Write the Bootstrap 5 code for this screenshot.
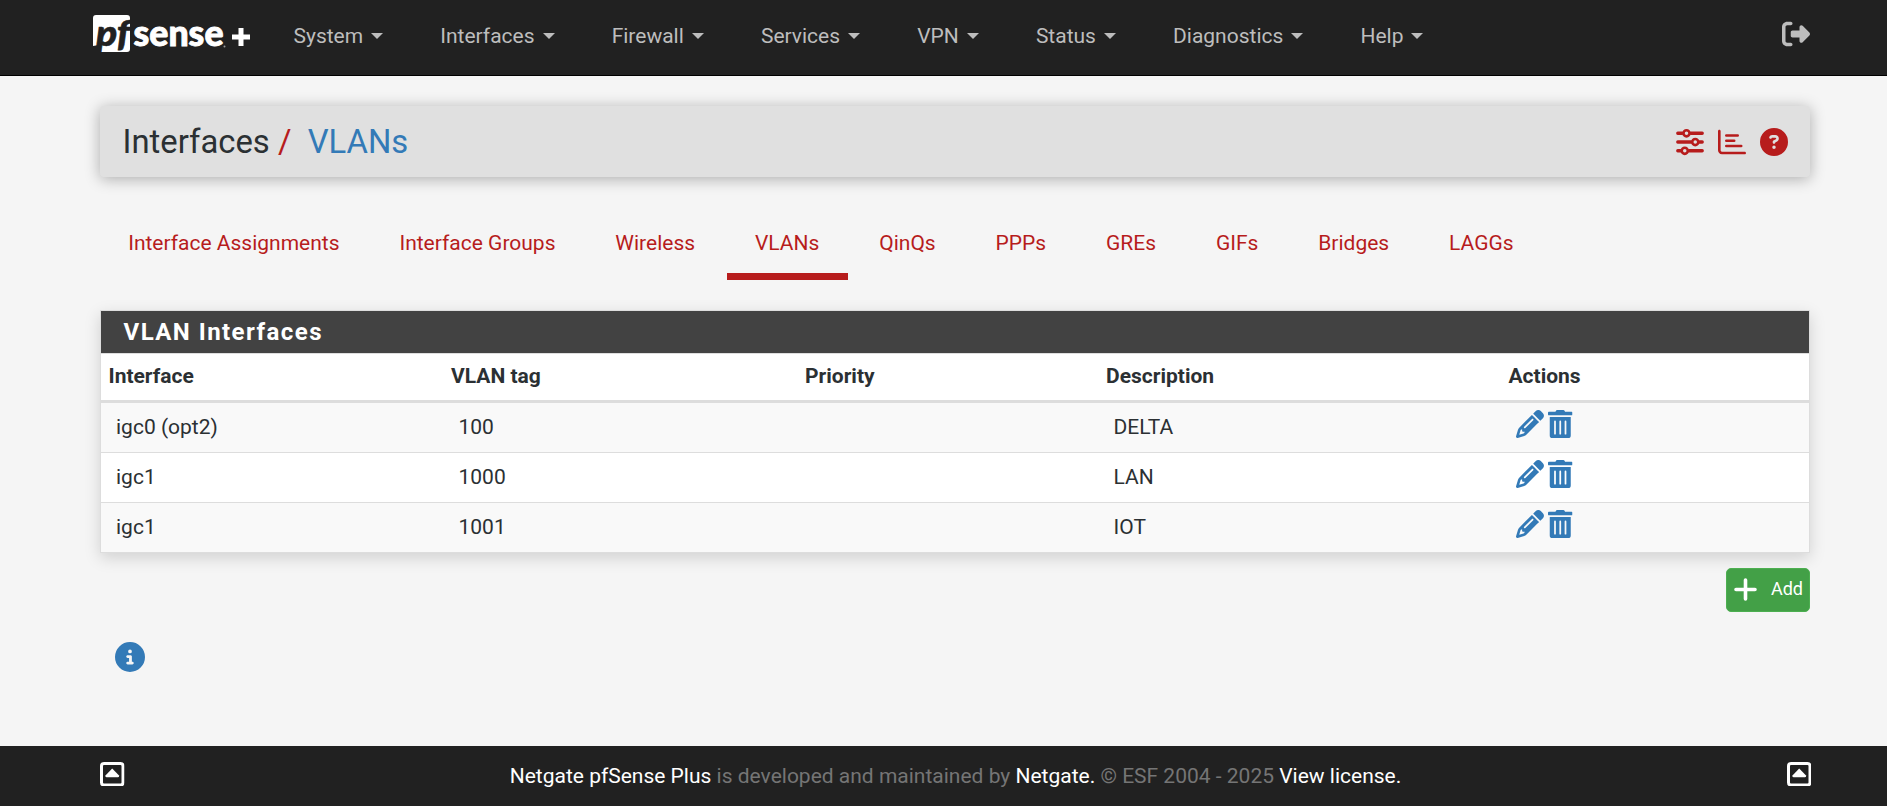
<!DOCTYPE html>
<html lang="en">
<head>
<meta charset="utf-8">
<title>Interfaces: VLANs</title>
<link href="https://cdn.jsdelivr.net/npm/bootstrap@5.3.0/dist/css/bootstrap.min.css" rel="stylesheet">
<style>
body{font-family:Roboto,sans-serif;font-size:21px;line-height:30px;background:#f5f5f5;color:#212121;min-height:806px}
a{text-decoration:none}
svg{display:block;fill:currentColor;flex:none}
.topnav{height:76px;background:#212121;border-bottom:1px solid #000;padding:0 77px 0 93px}
.topnav .nav-link{color:#bdbdbd;padding:0;line-height:30px}
.topnav .dropdown-toggle::after{border-top-width:6px;border-left-width:6px;border-right-width:6px;margin-left:8px;vertical-align:4px}
.logo{fill:#fff;margin-top:-5px}
.menu{gap:57.1px;margin-left:42.5px;padding-bottom:3px}
.page{width:1710px;margin:0 77px 0 100px}
.crumbs{height:71px;margin-top:30px;background:#e0e0e0;border-radius:4px;padding:0 22px 0 22.5px;box-shadow:0 2px 15px rgba(0,0,0,.3)}
.crumbs h1{font-size:32.8px;line-height:40px;font-weight:400;margin:0;color:#2b3033}
.red{color:#b71c1c}
.blue{color:#337ab7}
.tabs{margin-top:43px;gap:3.500px}
.tabs .nav-link{color:#b71c1c;padding:8px 28.200px 15px;border-bottom:7px solid transparent;line-height:30px}
.tabs .nav-link.active{border-color:#b71c1c}
.vpanel{margin-top:30px;border:1px solid #ddd;box-shadow:0 5px 15px rgba(0,0,0,.15)}
.vpanel h2{margin:0;height:42px;background:#424242;color:#fff;font-size:24px;font-weight:700;letter-spacing:1.45px;line-height:43px;padding-left:22.5px}
.vtable{table-layout:fixed;margin:0;border-top:1px solid #ddd;--bs-table-bg:#fff}
.vtable>:not(caption)>*>*{border:0;color:#2b3033;padding:0 15px;height:50px;line-height:49px;vertical-align:top}
.vtable thead th{padding:0 7.5px;height:48px;line-height:45px;border-bottom:3px solid #ddd!important}
.vtable tbody tr:nth-child(odd)>td{background:#f9f9f9;box-shadow:none}
.vtable tbody tr:not(:last-child)>td{border-bottom:1px solid #ddd}
.vtable tbody tr:last-child>td{height:49px}
.acts{gap:4px;padding-top:7px}
.addbtn{width:84px;height:44px;background:#43a047;border:1px solid #4caf50;border-radius:5px;color:#fff;font-size:18px;line-height:26px;padding:0 6px 2px 7px;margin-top:15px}
.foot{height:60px;background:#212121;color:#757575;padding:0 76px 0 100px}
.foot a{color:#fff}
</style>
</head>
<body class="d-flex flex-column">
<svg width="0" height="0" class="d-none">
<symbol id="pencil" viewBox="0 0 512 512"><path d="M410.3 231l11.3-11.3-33.9-33.9-62.1-62.1L291.7 89.8l-11.3 11.3-22.6 22.6L58.6 322.9c-10.4 10.4-18 23.3-22.2 37.4L1 480.7c-2.5 8.4-.2 17.5 6.1 23.7s15.3 8.5 23.7 6.1l120.3-35.4c14.1-4.2 27-11.8 37.4-22.2L387.7 253.7 410.3 231zM160 399.4l-9.1 22.7c-4 3.1-8.5 5.4-13.3 6.9L59.4 452l23-78.1c1.4-4.9 3.8-9.4 6.9-13.3l22.7-9.1v32c0 8.800 7.200 16 16 16h32zM362.700 18.700L348.300 33.200 325.700 55.800 314.300 67.100l33.900 33.900 62.100 62.100 33.900 33.900 11.300-11.300 22.600-22.600 14.500-14.500c25-25 25-65.500 0-90.500L453.300 18.700c-25-25-65.500-25-90.500 0zm-47.400 168l-144 144c-6.200 6.200-16.400 6.200-22.600 0s-6.200-16.400 0-22.600l144-144c6.200-6.200 16.400-6.200 22.600 0s6.200 16.400 0 22.600z"/></symbol>
<symbol id="trash" viewBox="0 0 448 512"><path d="M32 464a48 48 0 0 0 48 48h288a48 48 0 0 0 48-48V128H32zm272-256a16 16 0 0 1 32 0v224a16 16 0 0 1-32 0zm-96 0a16 16 0 0 1 32 0v224a16 16 0 0 1-32 0zm-96 0a16 16 0 0 1 32 0v224a16 16 0 0 1-32 0zM432 32H312l-9.400-18.700A24 24 0 0 0 281.100 0H166.800a23.700 23.700 0 0 0-21.400 13.300L136 32H16A16 16 0 0 0 0 48v32a16 16 0 0 0 16 16h416a16 16 0 0 0 16-16V48a16 16 0 0 0-16-16z"/></symbol>
<symbol id="caretbox" viewBox="0 0 24.500 24.500"><rect x="1.500" y="1.500" width="21.500" height="21.500" rx="2.500" fill="none" stroke="currentColor" stroke-width="3"/><path d="M12.200 6.500l6.600 6.700q1 1.800-.8 2H6.500q-1.800-.2-.8-2z"/></symbol>
</svg>
<nav class="topnav navbar-expand d-flex align-items-center">
  <a href="#" aria-label="pfSense plus">
    <svg class="logo" width="158" height="64" viewBox="93 3 158 64">
      <path d="M96 15h31q3 0 3 3v31q0 3-3 3H97l2-7-6 1V18q0-3 3-3z"/>
      <text x="96" y="45.500" font-family="Lato" font-weight="900" font-style="italic" font-size="36" textLength="34" lengthAdjust="spacingAndGlyphs" fill="#212121" stroke="#212121" stroke-width=".6">pf</text>
      <text x="133.500" y="45.500" font-family="Lato" font-weight="900" font-size="36" textLength="90" lengthAdjust="spacingAndGlyphs" stroke="#fff" stroke-width=".9">sense</text>
      <circle cx="224.500" cy="46.500" r="1" fill="#999"/>
      <path d="M238.500 28h5v6.500h6.500v5h-6.500V46h-5v-6.500H232v-5h6.500z"/>
    </svg>
  </a>
  <ul class="navbar-nav menu mb-0">
    <li class="nav-item dropdown"><a class="nav-link dropdown-toggle" href="#">System</a></li>
    <li class="nav-item dropdown"><a class="nav-link dropdown-toggle" href="#">Interfaces</a></li>
    <li class="nav-item dropdown"><a class="nav-link dropdown-toggle" href="#">Firewall</a></li>
    <li class="nav-item dropdown"><a class="nav-link dropdown-toggle" href="#">Services</a></li>
    <li class="nav-item dropdown"><a class="nav-link dropdown-toggle" href="#">VPN</a></li>
    <li class="nav-item dropdown"><a class="nav-link dropdown-toggle" href="#">Status</a></li>
    <li class="nav-item dropdown"><a class="nav-link dropdown-toggle" href="#">Diagnostics</a></li>
    <li class="nav-item dropdown"><a class="nav-link dropdown-toggle" href="#">Help</a></li>
  </ul>
  <a class="nav-link ms-auto pb-2" href="#" aria-label="Logout"><svg width="28" height="28" viewBox="0 0 512 512"><path d="M377.900 105.900L500.700 228.700c7.200 7.200 11.300 17.100 11.300 27.300s-4.100 20.100-11.300 27.300L377.900 406.100c-6.400 6.400-15 9.900-24 9.900c-18.700 0-33.900-15.200-33.900-33.900l0-62.100-128 0c-17.700 0-32-14.300-32-32l0-64c0-17.700 14.300-32 32-32l128 0 0-62.100c0-18.700 15.200-33.900 33.900-33.900c9 0 17.600 3.600 24 9.900zM160 96L96 96c-17.700 0-32 14.300-32 32l0 256c0 17.700 14.300 32 32 32l64 0c17.700 0 32 14.300 32 32s-14.300 32-32 32l-64 0c-53 0-96-43-96-96L0 128C0 75 43 32 96 32l64 0c17.700 0 32 14.300 32 32s-14.300 32-32 32z"/></svg></a>
</nav>

<main class="page flex-grow-1">
  <header class="crumbs d-flex align-items-center justify-content-between">
    <h1>Interfaces <span class="red">/</span>&nbsp; <a class="blue" href="#">VLANs</a></h1>
    <div class="d-flex red" style="gap:14px">
      <svg width="28" height="28" viewBox="0 0 512 512"><g stroke="currentColor" stroke-width="60" stroke-linecap="round"><path d="M32 96h80M272 96h208M32 256h240M432 256h48M32 416h48M240 416h240"/></g><g fill="none" stroke="currentColor" stroke-width="48"><circle cx="192" cy="96" r="56"/><circle cx="352" cy="256" r="56"/><circle cx="160" cy="416" r="56"/></g></svg>
      <svg width="28" height="28" viewBox="0 0 512 512"><path d="M24 32c13.300 0 24 10.700 24 24V408c0 13.300 10.700 24 24 24H488c13.300 0 24 10.700 24 24s-10.700 24-24 24H72c-39.800 0-72-32.200-72-72V56C0 42.700 10.700 32 24 32z"/><path d="M152 136H360M152 232H296M152 328H424" stroke="currentColor" stroke-width="48" stroke-linecap="round"/></svg>
      <svg width="28" height="28" viewBox="0 0 512 512"><path d="M256 512A256 256 0 1 0 256 0a256 256 0 1 0 0 512zM169.800 165.300c7.900-22.300 29.100-37.300 52.800-37.300h58.300c34.900 0 63.100 28.300 63.100 63.100c0 22.600-12.100 43.500-31.700 54.800L280 264.400c-.2 13-10.900 23.600-24 23.600c-13.300 0-24-10.700-24-24V250.500c0-8.600 4.600-16.500 12.100-20.800l44.300-25.400c4.700-2.700 7.600-7.700 7.600-13.100c0-8.400-6.800-15.100-15.100-15.100H222.600c-3.400 0-6.400 2.100-7.500 5.300l-.4 1.200c-4.400 12.500-18.200 19-30.600 14.600s-19-18.200-14.600-30.600l.4-1.200zM224 352a32 32 0 1 1 64 0 32 32 0 1 1 -64 0z"/></svg>
    </div>
  </header>

  <ul class="nav tabs">
    <li><a class="nav-link" href="#">Interface Assignments</a></li>
    <li><a class="nav-link" href="#">Interface Groups</a></li>
    <li><a class="nav-link" href="#">Wireless</a></li>
    <li><a class="nav-link active" href="#">VLANs</a></li>
    <li><a class="nav-link" href="#">QinQs</a></li>
    <li><a class="nav-link" href="#">PPPs</a></li>
    <li><a class="nav-link" href="#">GREs</a></li>
    <li><a class="nav-link" href="#">GIFs</a></li>
    <li><a class="nav-link" href="#">Bridges</a></li>
    <li><a class="nav-link" href="#">LAGGs</a></li>
  </ul>

  <section class="vpanel">
    <h2>VLAN Interfaces</h2>
    <table class="table vtable">
      <colgroup><col style="width:342.500px"><col style="width:354px"><col style="width:301px"><col style="width:402.500px"><col></colgroup>
      <thead><tr><th>Interface</th><th>VLAN tag</th><th>Priority</th><th>Description</th><th>Actions</th></tr></thead>
      <tbody>
        <tr><td>igc0 (opt2)</td><td>100</td><td></td><td>DELTA</td><td><div class="acts d-flex blue"><svg width="28" height="28"><use href="#pencil"/></svg><svg width="24.500" height="28"><use href="#trash"/></svg></div></td></tr>
        <tr><td>igc1</td><td>1000</td><td></td><td>LAN</td><td><div class="acts d-flex blue"><svg width="28" height="28"><use href="#pencil"/></svg><svg width="24.500" height="28"><use href="#trash"/></svg></div></td></tr>
        <tr><td>igc1</td><td>1001</td><td></td><td>IOT</td><td><div class="acts d-flex blue"><svg width="28" height="28"><use href="#pencil"/></svg><svg width="24.500" height="28"><use href="#trash"/></svg></div></td></tr>
      </tbody>
    </table>
  </section>

  <div class="d-flex justify-content-end">
    <a class="btn addbtn d-flex align-items-center justify-content-between" href="#"><svg width="23" height="23" viewBox="0 0 23 23"><path d="M11.500 2v19M2 11.500h19" stroke="#fff" stroke-width="3.600" stroke-linecap="round"/></svg>Add</a>
  </div>
  <svg class="blue" style="margin:30px 0 0 15px" width="30" height="30" viewBox="0 0 512 512"><path d="M256 512A256 256 0 1 0 256 0a256 256 0 1 0 0 512zM216 336h24V272H216c-13.300 0-24-10.700-24-24s10.700-24 24-24h48c13.300 0 24 10.700 24 24v88h8c13.300 0 24 10.700 24 24s-10.700 24-24 24H216c-13.300 0-24-10.700-24-24s10.700-24 24-24zm40-208a32 32 0 1 1 0 64 32 32 0 1 1 0-64z"/></svg>
</main>

<footer class="foot d-flex align-items-center justify-content-between">
  <a href="#" class="pb-1" aria-label="Top"><svg width="24.500" height="24.500"><use href="#caretbox"/></svg></a>
  <span><a href="#">Netgate pfSense Plus</a> is developed and maintained by <a href="#">Netgate.</a> © ESF 2004 - 2025 <a href="#">View license.</a></span>
  <a href="#" class="pb-1" aria-label="Top"><svg width="24.500" height="24.500"><use href="#caretbox"/></svg></a>
</footer>
<script src="https://cdn.jsdelivr.net/npm/bootstrap@5.3.0/dist/js/bootstrap.bundle.min.js"></script>
</body>
</html>
